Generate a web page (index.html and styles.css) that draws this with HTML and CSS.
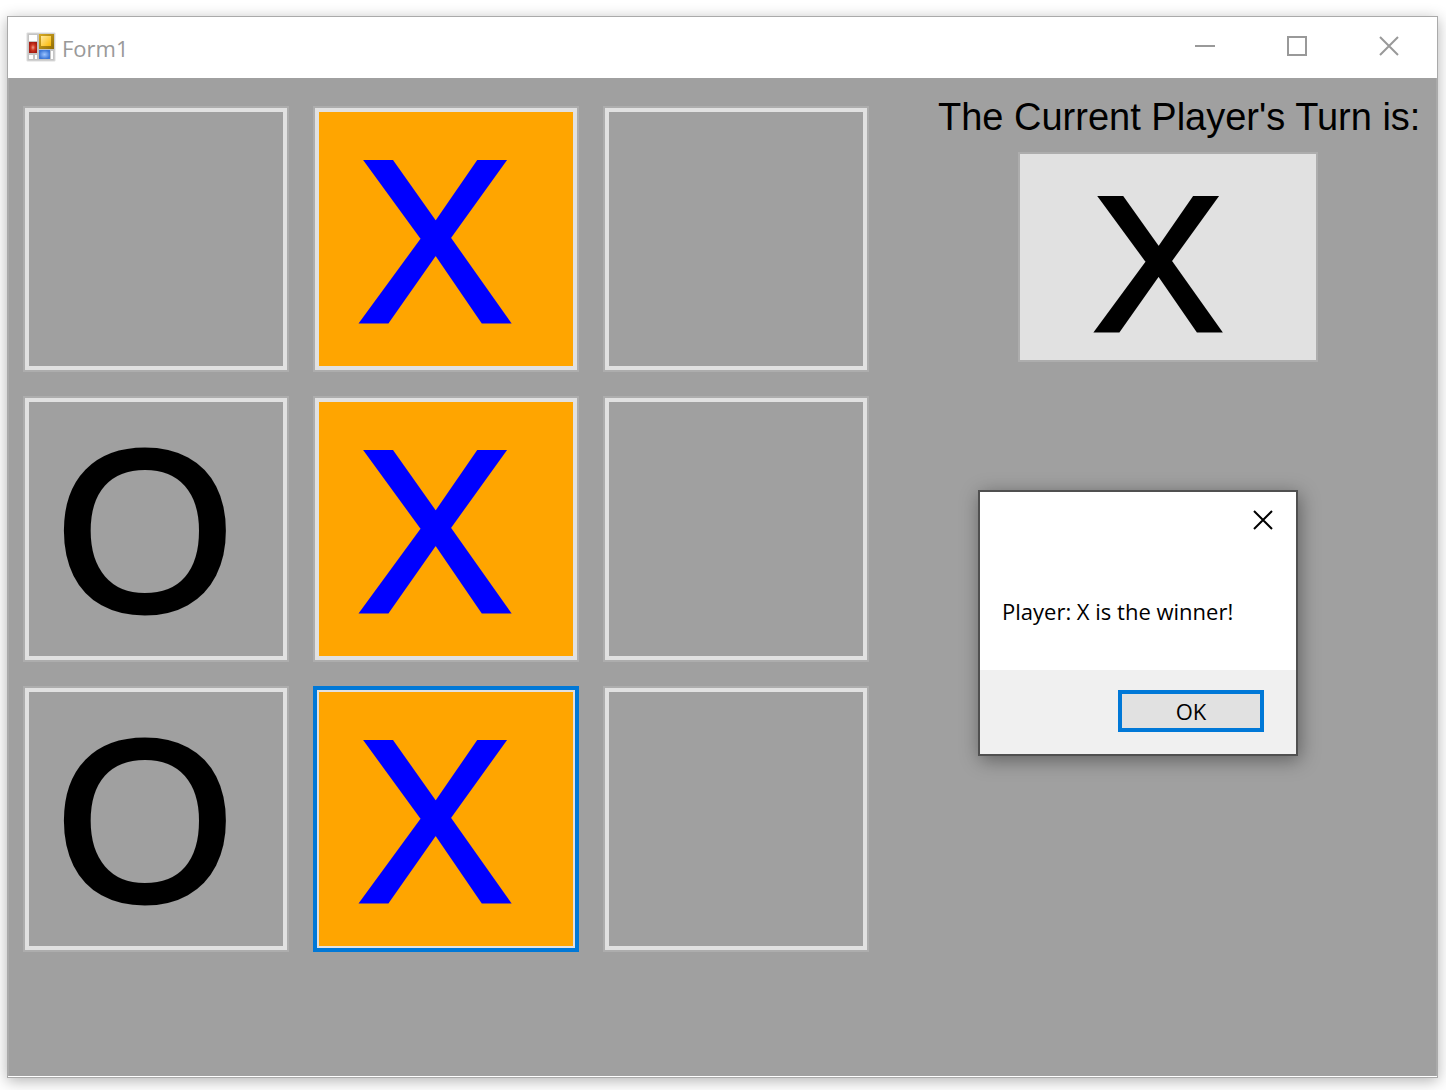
FILE: index.html
```html
<!DOCTYPE html>
<html lang="en">
<head>
<meta charset="utf-8">
<meta name="viewport" content="width=device-width, initial-scale=1">
<title>Form1</title>
<link rel="stylesheet" href="styles.css">
</head>
<body>
<div class="window">
  <header class="titlebar">
    <svg class="app-icon" viewBox="0 0 30 30" aria-hidden="true">
      <defs>
        <linearGradient id="gold" x1="0" y1="0" x2="1" y2="1"><stop offset="0" stop-color="#ffe9a0"/><stop offset="1" stop-color="#fbb800"/></linearGradient>
        <linearGradient id="gold-edge" x1="0" y1="0" x2="1" y2="1"><stop offset="0" stop-color="#d9ab22"/><stop offset="1" stop-color="#8f6c06"/></linearGradient>
        <radialGradient id="red"><stop offset="0" stop-color="#f0a090"/><stop offset="0.5" stop-color="#d03a25"/><stop offset="1" stop-color="#a81c12"/></radialGradient>
        <radialGradient id="blue"><stop offset="0" stop-color="#9cc4ff"/><stop offset="1" stop-color="#3d78d8"/></radialGradient>
      </defs>
      <rect x="0.5" y="0.5" width="29" height="29" rx="1" fill="#dcdcdc"/>
      <rect x="1.5" y="1.5" width="27" height="27" fill="#c4c4c4"/>
      <path d="M3 3h8v6H3zM3 23h4v4H3zM9 23h2v4H9zM25 19h2v8h-2z" fill="#fff"/>
      <rect x="3" y="10" width="8" height="11" fill="url(#red)"/>
      <rect x="13" y="2" width="15" height="15" fill="url(#gold-edge)"/>
      <rect x="15" y="4" width="10" height="10" fill="url(#gold)"/>
      <rect x="13" y="18" width="11" height="9" fill="url(#blue)"/>
    </svg>
    <h1 class="title">Form1</h1>
    <button class="caption-button" type="button" aria-label="Minimize"><svg viewBox="0 0 20 20"><path d="M0 10h20"/></svg></button>
    <button class="caption-button" type="button" aria-label="Maximize"><svg viewBox="0 0 20 20"><path d="M1 1h18v18H1z"/></svg></button>
    <button class="caption-button" type="button" aria-label="Close"><svg viewBox="0 0 20 20"><path d="M1 1l18 18M19 1L1 19"/></svg></button>
  </header>
  <main class="client">
    <section class="board" aria-label="Board">
      <button class="cell" type="button" aria-label="Empty"></button>
      <button class="cell win" type="button">X</button>
      <button class="cell" type="button" aria-label="Empty"></button>
      <button class="cell" type="button">O</button>
      <button class="cell win" type="button">X</button>
      <button class="cell" type="button" aria-label="Empty"></button>
      <button class="cell" type="button">O</button>
      <button class="cell win current" type="button">X</button>
      <button class="cell" type="button" aria-label="Empty"></button>
    </section>
    <section class="side">
      <h2 class="turn-label">The Current Player's Turn is:</h2>
      <button class="turn" type="button">X</button>
    </section>
    <div class="dialog" role="dialog" aria-labelledby="message">
      <div class="dialog-body">
        <button class="dialog-close" type="button" aria-label="Close"><svg viewBox="0 0 20 20"><path d="M1 1l18 18M19 1L1 19"/></svg></button>
        <p class="message" id="message">Player: X is the winner!</p>
      </div>
      <div class="dialog-footer"><button class="ok" type="button">OK</button></div>
    </div>
  </main>
</div>
</body>
</html>
```
FILE: styles.css
```css
* { box-sizing: border-box; }

body {
  display: flex;
  min-height: 100vh;
  margin: 0;
  padding: 16px 8px 12px 7px;
  background: #fff;
  font-family: "Open Sans", "Noto Sans", sans-serif;
}

button {
  margin: 0;
  padding: 0;
  border: 0;
  background: none;
  color: inherit;
  font: inherit;
}

.window {
  display: flex;
  flex: 1;
  flex-direction: column;
  min-width: 0;
  border: 1px solid #aaa;
  background: #fff;
  box-shadow: 0 3px 14px rgba(0, 0, 0, 0.3);
}

.titlebar {
  display: flex;
  align-items: center;
  height: 61px;
  padding: 0 2px 2px 18px;
  color: #999;
}

.app-icon {
  width: 30px;
  height: 30px;
}

.title {
  flex: 1;
  margin: 0;
  padding: 2px 0 0 6px;
  font-size: 22px;
  font-weight: 400;
  line-height: 32px;
}

.caption-button {
  display: grid;
  place-items: center;
  width: 92px;
  height: 58px;
  align-self: flex-start;
}

.caption-button svg,
.dialog-close svg {
  width: 20px;
  height: 20px;
  fill: none;
  stroke: currentColor;
  stroke-width: 2;
}

.client {
  position: relative;
  display: flex;
  flex: 1;
  gap: 69px;
  margin-bottom: 1px;
  padding: 18px 15px 24px 14px;
  border: solid #aaa;
  border-width: 0 1px;
  background: #a0a0a0;
  color: #000;
  font-family: "Liberation Sans", Arial, sans-serif;
}

.board {
  display: grid;
  flex: 0 1 846px;
  grid-template-columns: repeat(3, minmax(0, 1fr));
  gap: 24px;
  align-content: start;
  padding-top: 10px;
}

.cell {
  aspect-ratio: 1;
  padding: 6px 22px 0 0;
  border: 2px solid #adadad;
  box-shadow: inset 0 0 0 4px #e1e1e1;
  font-size: 230px;
  line-height: 1;
  -webkit-text-stroke: 5px currentColor;
}

.win {
  background: #ffa500;
  color: #00f;
}

.current {
  border-color: #0078d7;
  box-shadow: inset 0 0 0 2px #0078d7, inset 0 0 0 4px #e1e1e1;
}

.side {
  flex: 1;
  white-space: nowrap;
}

.turn-label {
  margin: 0 0 14px;
  font-size: 38px;
  font-weight: 400;
  line-height: 42px;
}

.turn {
  display: block;
  width: 300px;
  height: 210px;
  margin-left: 80px;
  padding: 14px 20px 0 0;
  border: 2px solid #adadad;
  background: #e1e1e1;
  font-size: 192px;
  line-height: 1;
  -webkit-text-stroke: 5px currentColor;
}

.dialog {
  position: absolute;
  top: 412px;
  right: 138px;
  width: 320px;
  border: 2px solid #505050;
  background: #fff;
  box-shadow: 2px 4px 18px rgba(0, 0, 0, 0.4);
  font-family: "Open Sans", "Noto Sans", sans-serif;
  font-size: 22px;
  line-height: 30px;
}

.dialog-body {
  display: flex;
  flex-direction: column;
  height: 178px;
}

.dialog-close {
  display: grid;
  place-items: center;
  align-self: flex-end;
  width: 66px;
  height: 56px;
}

.message {
  margin: 48px 0 0;
  padding-left: 22px;
  white-space: nowrap;
}

.dialog-footer {
  display: flex;
  justify-content: flex-end;
  padding: 20px 32px 22px;
  background: #f0f0f0;
}

.ok {
  width: 146px;
  height: 42px;
  border: 4px solid #0078d7;
  background: #e1e1e1;
}
```
